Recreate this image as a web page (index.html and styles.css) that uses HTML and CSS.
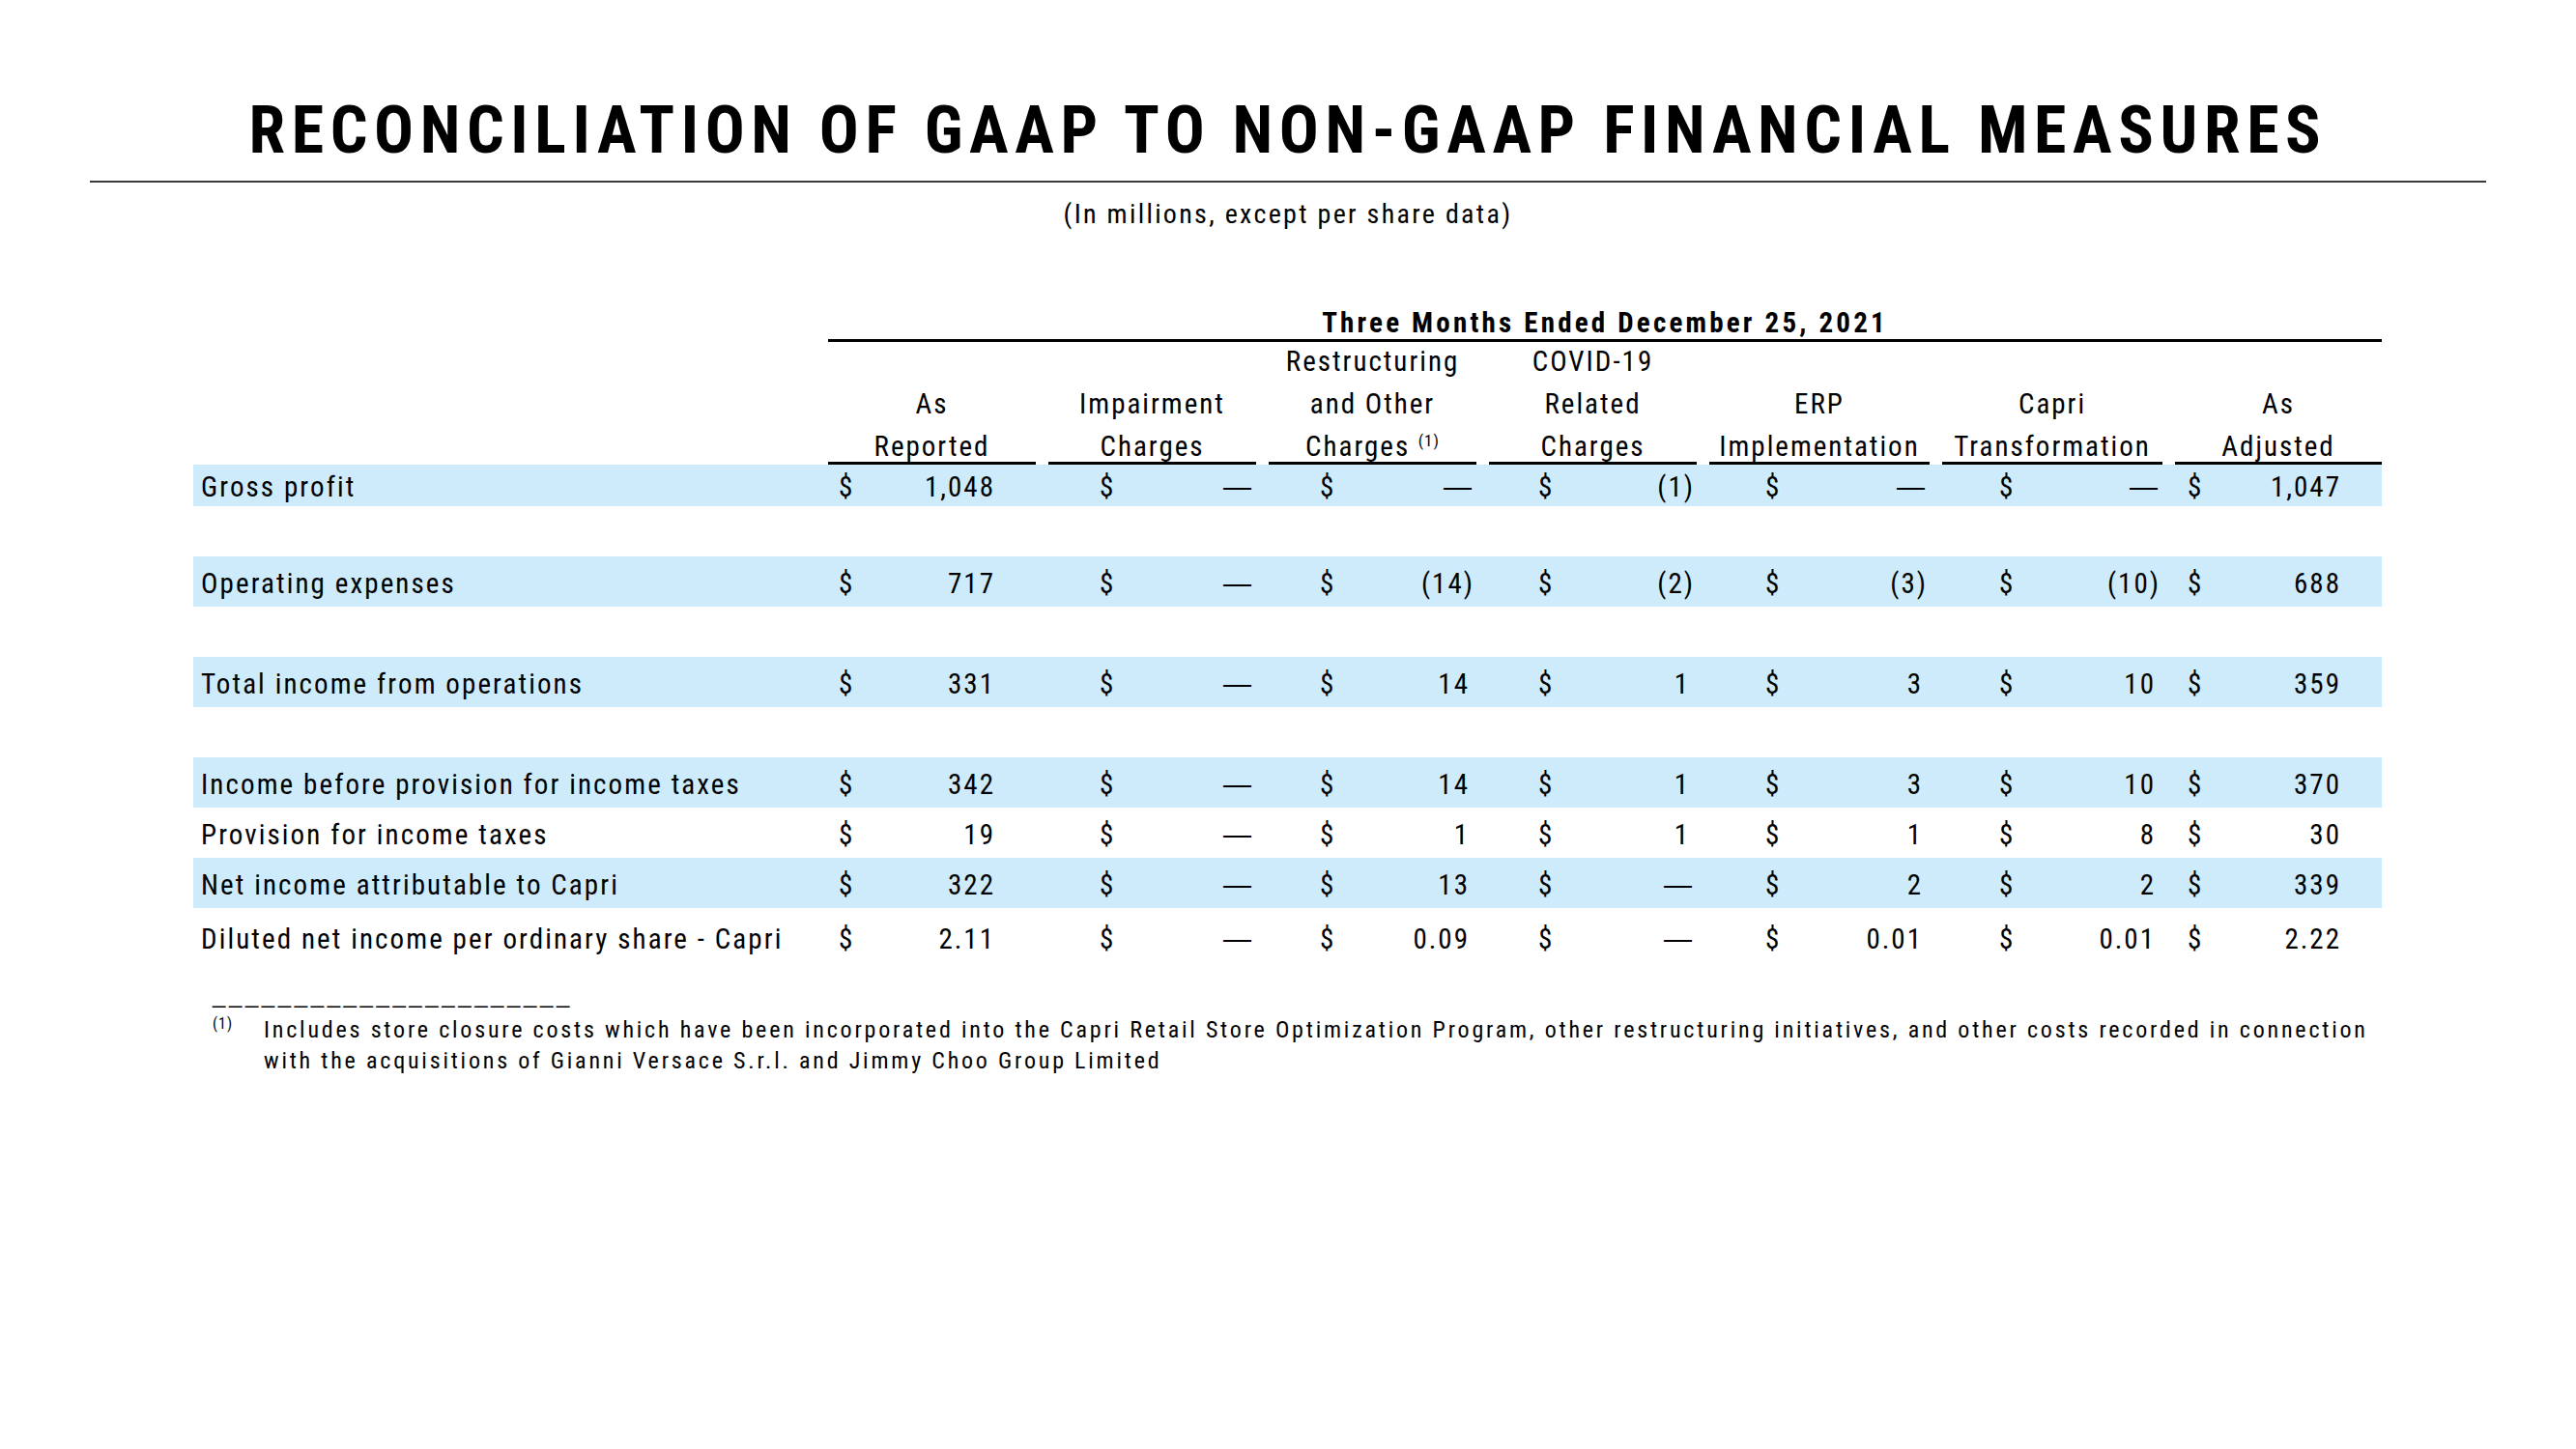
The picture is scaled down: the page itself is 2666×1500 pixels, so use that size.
FILE: index.html
```html
<!DOCTYPE html>
<html lang="en">
<head>
<meta charset="utf-8">
<title>Reconciliation of GAAP to Non-GAAP Financial Measures</title>
<link rel="stylesheet" href="styles.css">
</head>
<body>
<main class="slide">
  <h1 class="title">RECONCILIATION OF GAAP TO NON-GAAP FINANCIAL MEASURES</h1>
  <p class="subtitle">(In millions, except per share data)</p>

  <section class="recon">
    <div class="grid period-row">
      <div class="period">Three Months Ended December 25, 2021</div>
    </div>

    <div class="grid col-heads">
      <div class="ch first"><span>As<br>Reported</span></div>
      <div class="ch"><span>Impairment<br>Charges</span></div>
      <div class="ch"><span>Restructuring<br>and Other<br>Charges <sup class="fn">(1)</sup></span></div>
      <div class="ch"><span>COVID-19<br>Related<br>Charges</span></div>
      <div class="ch"><span>ERP<br>Implementation</span></div>
      <div class="ch"><span>Capri<br>Transformation</span></div>
      <div class="ch"><span>As<br>Adjusted</span></div>
    </div>

    <div class="grid row shade short">
      <div class="label">Gross profit</div>
      <div class="cell c1"><span>$</span><span class="v">1,048</span></div>
      <div class="cell c2"><span>$</span><span class="v nil">—</span></div>
      <div class="cell c3"><span>$</span><span class="v nil">—</span></div>
      <div class="cell c4"><span>$</span><span class="v neg">(1)</span></div>
      <div class="cell c5"><span>$</span><span class="v nil">—</span></div>
      <div class="cell c6"><span>$</span><span class="v nil">—</span></div>
      <div class="cell c7"><span>$</span><span class="v">1,047</span></div>
    </div>
    <div class="spacer"></div>

    <div class="grid row shade">
      <div class="label">Operating expenses</div>
      <div class="cell c1"><span>$</span><span class="v">717</span></div>
      <div class="cell c2"><span>$</span><span class="v nil">—</span></div>
      <div class="cell c3"><span>$</span><span class="v neg">(14)</span></div>
      <div class="cell c4"><span>$</span><span class="v neg">(2)</span></div>
      <div class="cell c5"><span>$</span><span class="v neg">(3)</span></div>
      <div class="cell c6"><span>$</span><span class="v neg">(10)</span></div>
      <div class="cell c7"><span>$</span><span class="v">688</span></div>
    </div>
    <div class="spacer"></div>

    <div class="grid row shade">
      <div class="label">Total income from operations</div>
      <div class="cell c1"><span>$</span><span class="v">331</span></div>
      <div class="cell c2"><span>$</span><span class="v nil">—</span></div>
      <div class="cell c3"><span>$</span><span class="v">14</span></div>
      <div class="cell c4"><span>$</span><span class="v">1</span></div>
      <div class="cell c5"><span>$</span><span class="v">3</span></div>
      <div class="cell c6"><span>$</span><span class="v">10</span></div>
      <div class="cell c7"><span>$</span><span class="v">359</span></div>
    </div>
    <div class="spacer"></div>

    <div class="grid row shade">
      <div class="label">Income before provision for income taxes</div>
      <div class="cell c1"><span>$</span><span class="v">342</span></div>
      <div class="cell c2"><span>$</span><span class="v nil">—</span></div>
      <div class="cell c3"><span>$</span><span class="v">14</span></div>
      <div class="cell c4"><span>$</span><span class="v">1</span></div>
      <div class="cell c5"><span>$</span><span class="v">3</span></div>
      <div class="cell c6"><span>$</span><span class="v">10</span></div>
      <div class="cell c7"><span>$</span><span class="v">370</span></div>
    </div>

    <div class="grid row">
      <div class="label">Provision for income taxes</div>
      <div class="cell c1"><span>$</span><span class="v">19</span></div>
      <div class="cell c2"><span>$</span><span class="v nil">—</span></div>
      <div class="cell c3"><span>$</span><span class="v">1</span></div>
      <div class="cell c4"><span>$</span><span class="v">1</span></div>
      <div class="cell c5"><span>$</span><span class="v">1</span></div>
      <div class="cell c6"><span>$</span><span class="v">8</span></div>
      <div class="cell c7"><span>$</span><span class="v">30</span></div>
    </div>

    <div class="grid row shade">
      <div class="label">Net income attributable to Capri</div>
      <div class="cell c1"><span>$</span><span class="v">322</span></div>
      <div class="cell c2"><span>$</span><span class="v nil">—</span></div>
      <div class="cell c3"><span>$</span><span class="v">13</span></div>
      <div class="cell c4"><span>$</span><span class="v nil">—</span></div>
      <div class="cell c5"><span>$</span><span class="v">2</span></div>
      <div class="cell c6"><span>$</span><span class="v">2</span></div>
      <div class="cell c7"><span>$</span><span class="v">339</span></div>
    </div>

    <div class="grid row tall">
      <div class="label">Diluted net income per ordinary share - Capri</div>
      <div class="cell c1"><span>$</span><span class="v">2.11</span></div>
      <div class="cell c2"><span>$</span><span class="v nil">—</span></div>
      <div class="cell c3"><span>$</span><span class="v">0.09</span></div>
      <div class="cell c4"><span>$</span><span class="v nil">—</span></div>
      <div class="cell c5"><span>$</span><span class="v">0.01</span></div>
      <div class="cell c6"><span>$</span><span class="v">0.01</span></div>
      <div class="cell c7"><span>$</span><span class="v">2.22</span></div>
    </div>
  </section>

  <footer class="notes">
    <div class="rule-text">______________________</div>
    <div class="note">
      <span class="mark">(1)</span>
      <p class="note-text">Includes store closure costs which have been incorporated into the Capri Retail Store Optimization Program, other restructuring initiatives, and other costs recorded in connection<br>with the acquisitions of Gianni Versace S.r.l. and Jimmy Choo Group Limited</p>
    </div>
  </footer>
</main>
</body>
</html>
```

FILE: styles.css
```css
html, body {
  margin: 0;
  padding: 0;
  background: #ffffff;
}

body {
  font-family: "Roboto Condensed", "Liberation Sans Narrow", "Arial Narrow", Roboto, sans-serif;
  font-stretch: condensed;
  color: #000000;
}

.slide {
  width: 2666px;
  height: 1500px;
  box-sizing: border-box;
  padding-top: 95px;
}

.title {
  margin: 0 93px;
  padding-bottom: 12px;
  border-bottom: 2px solid #3a3a3a;
  font-size: 68px;
  line-height: 80px;
  font-weight: bold;
  letter-spacing: 6.6px;
  text-align: center;
  white-space: nowrap;
}

.subtitle {
  margin: 16px 0 0;
  font-size: 28px;
  line-height: 34px;
  letter-spacing: 2.3px;
  text-align: center;
}

.recon {
  margin: 78px 0 0 200px;
  width: 2265px;
  font-size: 29px;
  letter-spacing: 2px;
}

.grid {
  display: grid;
  grid-template-columns: 644px 215px 215px 215px 215px 228px 228px 214px;
  column-gap: 13px;
}

.period-row .period {
  grid-column: 2 / -1;
  font-weight: bold;
  letter-spacing: 3.2px;
  line-height: 34px;
  text-align: center;
  border-bottom: 3px solid #000;
}

.col-heads {
  margin-top: -2px;
  align-items: end;
}

.ch {
  text-align: center;
  border-bottom: 3px solid #000;
}

.ch.first {
  grid-column: 2;
}

.ch span {
  display: block;
  line-height: 44px;
  margin-bottom: -6px;
}

.fn {
  font-size: 17px;
  line-height: 0;
  letter-spacing: 1px;
  vertical-align: 10px;
}

.row {
  height: 52px;
  box-sizing: border-box;
  padding-top: 4px;
  line-height: 48px;
}

.row.short {
  height: 43px;
  line-height: 39px;
}

.row.tall {
  height: 58px;
  padding-top: 6px;
  line-height: 52px;
}

.shade {
  background: #cdebfb;
}

.spacer {
  height: 52px;
}

.label {
  padding-left: 8px;
  white-space: nowrap;
  letter-spacing: 2.1px;
}

.cell {
  display: flex;
  justify-content: space-between;
  white-space: nowrap;
}

.v {
  padding-right: 7px;
}

.v.neg {
  padding-right: 2px;
}

.v.nil {
  font-family: "Liberation Sans", Arial, sans-serif;
  letter-spacing: 0;
  padding-right: 5px;
}

.c1 { padding-left: 11px; }
.c2 { padding-left: 53px; }
.c3 { padding-left: 53px; }
.c4 { padding-left: 51px; }
.c5 { padding-left: 58px; }
.c6 { padding-left: 59px; }
.c7 { padding-left: 13px; }

.c1 .v,
.c7 .v {
  padding-right: 42px;
}

.notes {
  margin: 18px 0 0 220px;
  font-size: 24px;
  letter-spacing: 2.8px;
}

.rule-text {
  font-family: "Liberation Sans", Arial, sans-serif;
  letter-spacing: 3.6px;
  line-height: 28px;
}

.note {
  display: flex;
  margin-top: 6px;
}

.mark {
  flex: 0 0 53px;
  font-size: 16px;
  line-height: 1;
  letter-spacing: 1px;
  padding-top: 2px;
}

.note-text {
  margin: 0;
  line-height: 32px;
  white-space: nowrap;
}
```
